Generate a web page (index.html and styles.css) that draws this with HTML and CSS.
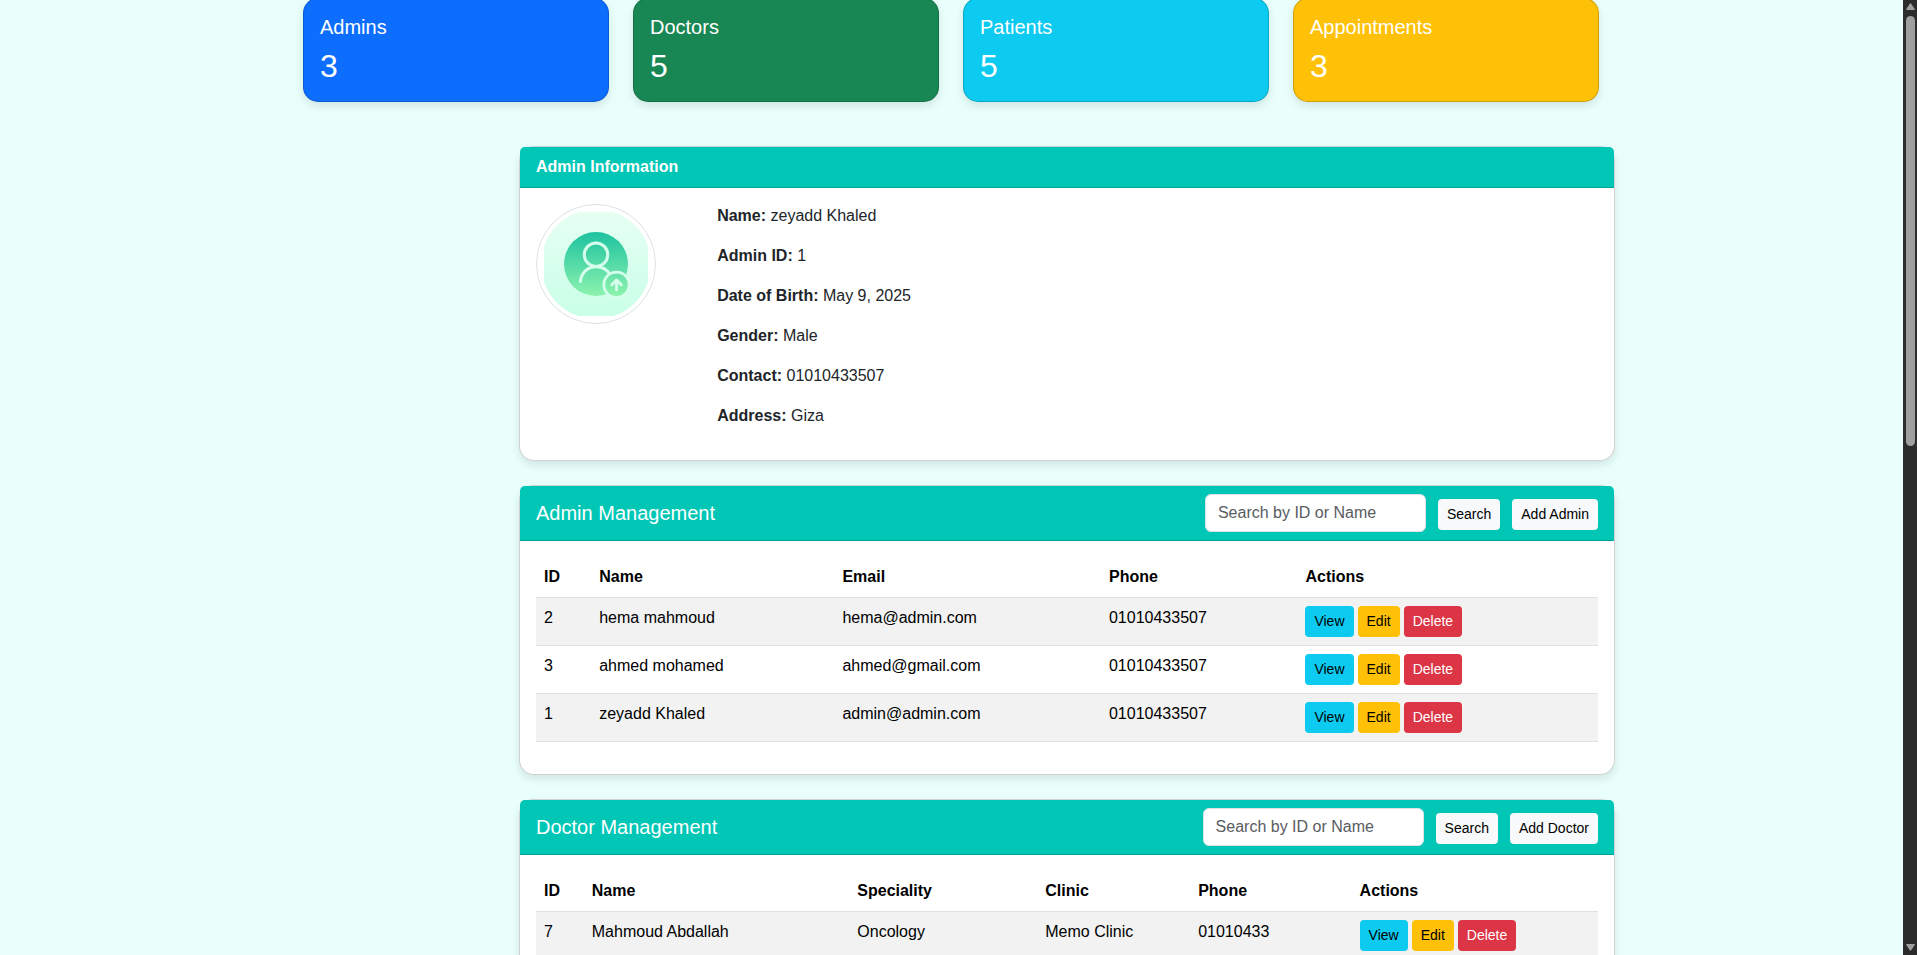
FILE: index.html
```html
<!DOCTYPE html>
<html lang="en">
<head>
<meta charset="utf-8">
<meta name="viewport" content="width=device-width, initial-scale=1">
<title>Admin Dashboard</title>
<link rel="stylesheet" href="styles.css">
</head>
<body>
<div class="viewport">
  <main class="container">
    <section class="stats" aria-label="Totals">
      <article class="stat stat-primary"><h5 class="stat-title">Admins</h5><p class="stat-value">3</p></article>
      <article class="stat stat-success"><h5 class="stat-title">Doctors</h5><p class="stat-value">5</p></article>
      <article class="stat stat-info"><h5 class="stat-title">Patients</h5><p class="stat-value">5</p></article>
      <article class="stat stat-warning"><h5 class="stat-title">Appointments</h5><p class="stat-value">3</p></article>
    </section>

    <div class="panels">
      <section class="panel">
        <header class="panel-header"><strong>Admin Information</strong></header>
        <div class="panel-body profile">
          <div class="avatar">
            <svg class="avatar-image" viewBox="0 0 110 110" role="img" aria-label="Profile picture">
              <defs>
                <linearGradient id="tile" x1="0" y1="0" x2="0" y2="1"><stop offset="0" stop-color="#e6fff2"/><stop offset="1" stop-color="#c9ffe8"/></linearGradient>
                <linearGradient id="disc" gradientUnits="userSpaceOnUse" x1="0" y1="23" x2="0" y2="87"><stop offset="0" stop-color="#1dc2a0"/><stop offset="1" stop-color="#8df3ae"/></linearGradient>
              </defs>
              <rect x="3" y="3" width="104" height="104" rx="2" fill="url(#tile)"/>
              <circle cx="55" cy="55" r="32" fill="url(#disc)"/>
              <g fill="none" stroke="#d5ffec" stroke-width="3" stroke-linecap="round">
                <circle cx="55" cy="45.7" r="11.7"/>
                <path d="M39.3 72.5C40.3 64 46.5 57.7 55 57.7c6 0 11 2.8 14 7.5"/>
              </g>
              <circle cx="75.5" cy="75.7" r="14" fill="#d5ffec"/>
              <circle cx="75.5" cy="75.7" r="11.3" fill="url(#disc)"/>
              <path d="M75.5 80.700V71.500M70.800 75.700l4.700-4.700 4.700 4.700" fill="none" stroke="#d5ffec" stroke-width="3" stroke-linecap="round" stroke-linejoin="round"/>
            </svg>
          </div>
          <div class="details">
            <p><strong>Name:</strong> zeyadd Khaled</p>
            <p><strong>Admin ID:</strong> 1</p>
            <p><strong>Date of Birth:</strong> May 9, 2025</p>
            <p><strong>Gender:</strong> Male</p>
            <p><strong>Contact:</strong> 01010433507</p>
            <p><strong>Address:</strong> Giza</p>
          </div>
        </div>
      </section>

      <section class="panel">
        <header class="panel-header">
          <h5 class="panel-title">Admin Management</h5>
          <form class="tools">
            <input class="search" type="text" placeholder="Search by ID or Name" aria-label="Search admins">
            <button class="btn btn-light" type="button">Search</button>
            <button class="btn btn-light" type="button">Add Admin</button>
          </form>
        </header>
        <div class="panel-body">
          <table class="table">
            <colgroup><col class="a-id"><col class="a-name"><col class="a-email"><col class="a-phone"><col></colgroup>
            <thead><tr><th>ID</th><th>Name</th><th>Email</th><th>Phone</th><th>Actions</th></tr></thead>
            <tbody>
              <tr><td>2</td><td>hema mahmoud</td><td>hema@admin.com</td><td>01010433507</td><td><div class="actions"><button class="btn btn-info" type="button">View</button><button class="btn btn-warning" type="button">Edit</button><button class="btn btn-danger" type="button">Delete</button></div></td></tr>
              <tr><td>3</td><td>ahmed mohamed</td><td>ahmed@gmail.com</td><td>01010433507</td><td><div class="actions"><button class="btn btn-info" type="button">View</button><button class="btn btn-warning" type="button">Edit</button><button class="btn btn-danger" type="button">Delete</button></div></td></tr>
              <tr><td>1</td><td>zeyadd Khaled</td><td>admin@admin.com</td><td>01010433507</td><td><div class="actions"><button class="btn btn-info" type="button">View</button><button class="btn btn-warning" type="button">Edit</button><button class="btn btn-danger" type="button">Delete</button></div></td></tr>
            </tbody>
          </table>
        </div>
      </section>

      <section class="panel">
        <header class="panel-header">
          <h5 class="panel-title">Doctor Management</h5>
          <form class="tools">
            <input class="search" type="text" placeholder="Search by ID or Name" aria-label="Search doctors">
            <button class="btn btn-light" type="button">Search</button>
            <button class="btn btn-light" type="button">Add Doctor</button>
          </form>
        </header>
        <div class="panel-body">
          <table class="table">
            <colgroup><col class="d-id"><col class="d-name"><col class="d-speciality"><col class="d-clinic"><col class="d-phone"><col></colgroup>
            <thead><tr><th>ID</th><th>Name</th><th>Speciality</th><th>Clinic</th><th>Phone</th><th>Actions</th></tr></thead>
            <tbody>
              <tr><td>7</td><td>Mahmoud Abdallah</td><td>Oncology</td><td>Memo Clinic</td><td>01010433</td><td><div class="actions"><button class="btn btn-info" type="button">View</button><button class="btn btn-warning" type="button">Edit</button><button class="btn btn-danger" type="button">Delete</button></div></td></tr>
            </tbody>
          </table>
        </div>
      </section>
    </div>
  </main>
</div>
<div class="scrollbar" aria-hidden="true">
  <svg class="scroll-arrow" viewBox="0 0 9 7"><path d="M4.5 0.5L8.5 6.5H0.5Z" stroke-linejoin="round"/></svg>
  <div class="scroll-thumb"></div>
  <svg class="scroll-arrow scroll-arrow-down" viewBox="0 0 9 7"><path d="M0.5 0.5H8.5L4.5 6.5Z" stroke-linejoin="round"/></svg>
</div>
</body>
</html>
```
FILE: styles.css
```css
*, *::before, *::after { box-sizing: border-box; }

body {
  margin: 0;
  display: flex;
  gap: 1px;
  height: 100vh;
  overflow: hidden;
  background: #e8fffc;
  color: #212529;
  font: 400 16px/24px "Liberation Sans", Arial, sans-serif;
}

h5, p { margin: 0; font-weight: 400; }
button, input { font-family: inherit; }

.viewport { flex: 1; min-width: 0; overflow: hidden; }

.container {
  max-width: 1320px;
  margin: -2px auto 0;
  padding: 0 12px;
}

.stats {
  display: grid;
  grid-template-columns: repeat(4, 1fr);
  gap: 24px;
}

.stat {
  padding: 16px;
  border: 1px solid rgba(0, 0, 0, 0.175);
  border-radius: 15px;
  box-shadow: 0 4px 8px rgba(0, 0, 0, 0.1);
  color: #fff;
}
.stat-primary { background: #0d6efd; }
.stat-success { background: #198754; }
.stat-info { background: #0dcaf0; }
.stat-warning { background: #ffc107; }
.stat-title { margin-bottom: 8px; font-size: 20px; line-height: 24px; }
.stat-value { font-size: 32px; line-height: 38px; }

.panels {
  display: flex;
  flex-direction: column;
  gap: 24px;
  margin: 44px -16px 24px 216px;
}

.panel {
  border: 1px solid rgba(0, 0, 0, 0.175);
  border-radius: 15px;
  background: #fff;
  box-shadow: 0 4px 8px rgba(0, 0, 0, 0.1);
}

.panel-header {
  display: flex;
  align-items: center;
  justify-content: space-between;
  padding: 8px 16px;
  border-bottom: 1px solid rgba(0, 0, 0, 0.175);
  border-radius: 5px 5px 0 0;
  background: #00c6b6;
  color: #fff;
}

.panel-title { font-size: 20px; line-height: 24px; }
.panel-body { padding: 16px; }

.profile { display: grid; grid-template-columns: 1fr 5fr; gap: 5px; }

.avatar {
  width: 120px;
  height: 120px;
  padding: 4px;
  border: 1px solid #dee2e6;
  border-radius: 50%;
}
.avatar-image { display: block; width: 100%; height: 100%; border-radius: 50%; overflow: hidden; }

.details p { margin-bottom: 16px; }

.tools { display: flex; align-items: flex-start; gap: 12px; }
.tools .btn { margin-top: 5px; }

.search {
  width: 221px;
  height: 38px;
  padding: 6px 12px;
  border: 1px solid #dee2e6;
  border-radius: 6px;
  background: #fff;
  color: #212529;
  font-size: 16px;
  line-height: 24px;
}
.search::placeholder { color: #595c5f; }

.btn {
  padding: 4px 8px;
  border: 1px solid transparent;
  border-radius: 4px;
  font-size: 14px;
  line-height: 21px;
  color: #000;
  cursor: pointer;
}
.btn-light { background: #f8f9fa; }
.btn-info { background: #0dcaf0; }
.btn-warning { background: #ffc107; }
.btn-danger { background: #dc3545; color: #fff; }

.table {
  width: 100%;
  margin-bottom: 16px;
  border-collapse: collapse;
  table-layout: fixed;
  color: #000;
}
.table th, .table td {
  padding: 8px;
  border-bottom: 1px solid #dee2e6;
  text-align: left;
  vertical-align: top;
}
.table tbody tr:nth-child(odd) { background: #f2f2f2; }

.a-id { width: 5.2%; }
.a-name { width: 22.9%; }
.a-email { width: 25.1%; }
.a-phone { width: 18.5%; }

.d-id { width: 4.5%; }
.d-name { width: 25%; }
.d-speciality { width: 17.7%; }
.d-clinic { width: 14.4%; }
.d-phone { width: 15.2%; }

.actions { display: flex; gap: 4px; }

.scrollbar {
  display: flex;
  flex-direction: column;
  align-items: center;
  flex: 0 0 14px;
  padding: 3px 0 4px;
  background: #2c2c2c;
}
.scroll-arrow { width: 9px; height: 7px; fill: #9f9f9f; stroke: #9f9f9f; }
.scroll-arrow-down { margin-top: auto; }
.scroll-thumb { width: 9px; height: 45.4%; margin-top: 6px; border-radius: 5px; background: #9f9f9f; }
```
